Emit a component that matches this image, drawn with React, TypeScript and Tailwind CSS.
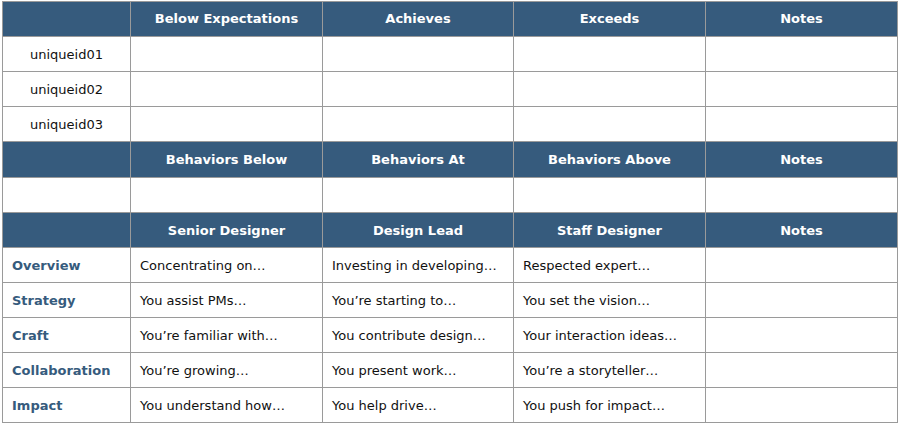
const headCell = "border border-[#9a9a9a] bg-[#365b7d] text-white font-bold text-center h-[35px] p-0";
const base = "border border-[#9a9a9a] h-[35px] px-[9px] pt-px pb-0";
const cell = base + " text-left";

const HeadRow = ({ labels, tall, low }: { labels: string[]; tall?: boolean; low?: boolean }) => (
  <tr className={tall ? "h-[36px]" : ""}>
    <th className={headCell}></th>
    {labels.map((l) => (
      <th key={l} className={headCell + (low ? " pt-[2px]" : "")}>
        {l}
      </th>
    ))}
  </tr>
);

const ids = ["uniqueid01", "uniqueid02", "uniqueid03"];

const levels = [
  ["Overview", "Concentrating on…", "Investing in developing…", "Respected expert…"],
  ["Strategy", "You assist PMs…", "You’re starting to…", "You set the vision…"],
  ["Craft", "You’re familiar with…", "You contribute design…", "Your interaction ideas…"],
  ["Collaboration", "You’re growing…", "You present work…", "You’re a storyteller…"],
  ["Impact", "You understand how…", "You help drive…", "You push for impact…"],
];

export default function App() {
  return (
    <div className="bg-white w-[899px] h-[426px] pt-px pl-[2px] font-['DejaVu_Sans',Verdana,sans-serif] text-[13px] text-[#111]">
      <table className="border-collapse table-fixed w-[896px]">
        <colgroup>
          <col className="w-[128px]" />
          <col className="w-[192px]" />
          <col className="w-[191px]" />
          <col className="w-[192px]" />
          <col className="w-[192px]" />
        </colgroup>
        <tbody>
          <HeadRow labels={["Below Expectations", "Achieves", "Exceeds", "Notes"]} />
          {ids.map((id) => (
            <tr key={id}>
              <td className={base + " text-center"}>{id}</td>
              <td className={cell}></td>
              <td className={cell}></td>
              <td className={cell}></td>
              <td className={cell}></td>
            </tr>
          ))}
          <HeadRow tall labels={["Behaviors Below", "Behaviors At", "Behaviors Above", "Notes"]} />
          <tr>
            <td className={cell}></td>
            <td className={cell}></td>
            <td className={cell}></td>
            <td className={cell}></td>
            <td className={cell}></td>
          </tr>
          <HeadRow low labels={["Senior Designer", "Design Lead", "Staff Designer", "Notes"]} />
          {levels.map(([label, a, b, c]) => (
            <tr key={label}>
              <td className={cell + " font-bold text-[#365b7d]"}>{label}</td>
              <td className={cell}>{a}</td>
              <td className={cell}>{b}</td>
              <td className={cell}>{c}</td>
              <td className={cell}></td>
            </tr>
          ))}
        </tbody>
      </table>
    </div>
  );
}
